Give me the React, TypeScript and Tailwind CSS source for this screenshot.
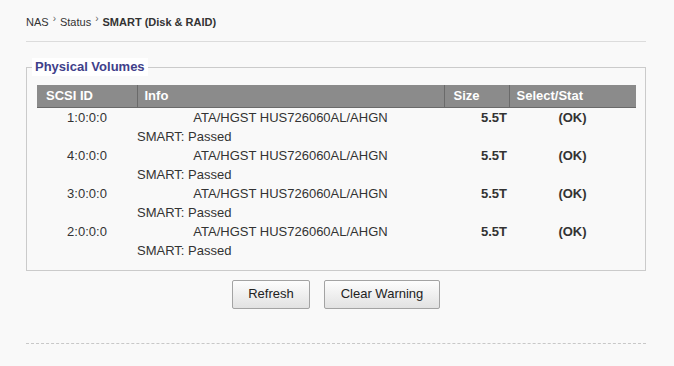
const disks = [
  { id: "1:0:0:0", model: "ATA/HGST HUS726060AL/AHGN", size: "5.5T", stat: "(OK)" },
  { id: "4:0:0:0", model: "ATA/HGST HUS726060AL/AHGN", size: "5.5T", stat: "(OK)" },
  { id: "3:0:0:0", model: "ATA/HGST HUS726060AL/AHGN", size: "5.5T", stat: "(OK)" },
  { id: "2:0:0:0", model: "ATA/HGST HUS726060AL/AHGN", size: "5.5T", stat: "(OK)" },
];

const Crumb = () => (
  <span className="mx-[4px] relative top-[-4px] text-[10px] text-[#666]">›</span>
);

const Button = ({ label, width }: { label: string; width: string }) => (
  <button
    className={`${width} h-[29px] rounded-[2px] border border-[#a3a3a3] bg-gradient-to-b from-[#fdfdfd] to-[#e2e2e2] text-[13px] text-[#222]`}
  >
    {label}
  </button>
);

const App = () => {
  return (
    <div
      className="min-h-[366px] bg-[#f9f9f9] pl-[26px] pr-[28px] pt-[15px] text-[#333]"
      style={{ fontFamily: '"Liberation Sans", Arial, sans-serif' }}
    >
      <div className="text-[11px] leading-[14px]">
        NAS
        <Crumb />
        Status
        <Crumb />
        <span className="font-bold">SMART (Disk &amp; RAID)</span>
      </div>
      <div className="mt-[11px] border-t border-[#dcdcdc]" />

      <fieldset className="mt-[16px] border border-[#cbcbcb] pl-[10px] pr-[9px] pt-[9px] pb-[10px]">
        <legend className="ml-[-5px] bg-white px-[3px] text-[13px] leading-[18px] font-bold text-[#40408a]">
          Physical Volumes
        </legend>
        <table className="w-[599px] table-fixed border-collapse text-[13px]">
          <colgroup>
            <col className="w-[100px]" />
            <col className="w-[307px]" />
            <col className="w-[65px]" />
            <col className="w-[127px]" />
          </colgroup>
          <thead>
            <tr className="h-[22px] bg-[#8b8b8b] text-left font-bold text-white">
              <th className="border-r border-b border-[#6a6a6a] pl-[9px] font-bold">SCSI ID</th>
              <th className="border-r border-b border-[#6a6a6a] pl-[7px] font-bold">Info</th>
              <th className="border-r border-b border-[#6a6a6a] pl-[9px] font-bold">Size</th>
              <th className="border-b border-[#6a6a6a] pl-[7px] font-bold">Select/Stat</th>
            </tr>
          </thead>
          <tbody>
            {disks.map((d) => (
              <>
                <tr key={d.id} className="h-[19px] leading-[19px]">
                  <td className="text-center">{d.id}</td>
                  <td className="text-center">{d.model}</td>
                  <td className="pr-[2px] text-right font-bold">{d.size}</td>
                  <td className="text-center font-bold">{d.stat}</td>
                </tr>
                <tr key={d.id + "-s"} className="h-[19px] leading-[19px]">
                  <td />
                  <td colSpan={3}>SMART: Passed</td>
                </tr>
              </>
            ))}
          </tbody>
        </table>
      </fieldset>

      <div className="mt-[9px] flex justify-center gap-[14px]">
        <Button label="Refresh" width="w-[78px]" />
        <Button label="Clear Warning" width="w-[116px]" />
      </div>

      <div className="mt-[34px] border-t border-dashed border-[#c8c8c8]" />
    </div>
  );
};

export default App;
